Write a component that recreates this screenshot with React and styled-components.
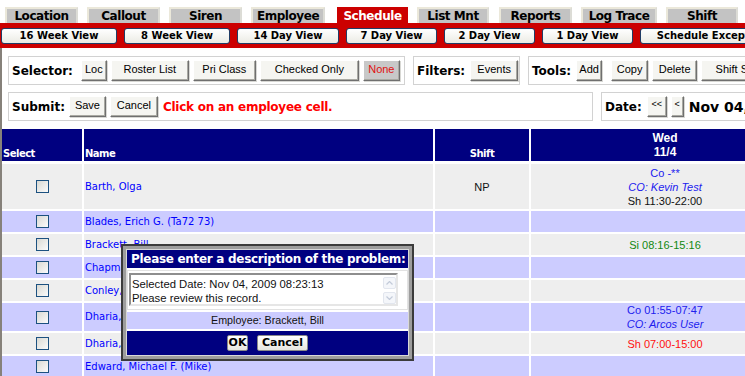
import React from "react";
import styled, { createGlobalStyle } from "styled-components";

const GlobalStyle = createGlobalStyle`
  html, body {
    margin: 0;
    padding: 0;
    background: #ffffff;
    overflow: hidden;
  }
  body {
    font-family: "Liberation Sans", Arial, sans-serif;
  }
`;

const tabs = [
  { label: "Location", w: 73, ml: 0 },
  { label: "Callout", w: 73, ml: 9 },
  { label: "Siren", w: 73, ml: 9 },
  { label: "Employee", w: 74, ml: 9 },
  { label: "Schedule", w: 71, ml: 12, active: true },
  { label: "List Mnt", w: 72, ml: 9 },
  { label: "Reports", w: 73, ml: 10 },
  { label: "Log Trace", w: 76, ml: 9 },
  { label: "Shift", w: 72, ml: 9 },
];

const views = [
  { label: "16 Week View", w: 116 },
  { label: "8 Week View", w: 106 },
  { label: "14 Day View", w: 102 },
  { label: "7 Day View", w: 91 },
  { label: "2 Day View", w: 91 },
  { label: "1 Day View", w: 91 },
  { label: "Schedule Exceptions", w: 150 },
];

const rows = [
  {
    name: "Barth, Olga",
    shift: "NP",
    h: 45,
    lines: [
      { t: "Co -**", c: "#2020ee" },
      { t: "CO: Kevin Test", c: "#2020ee", i: true },
      { t: "Sh 11:30-22:00", c: "#111111" },
    ],
  },
  { name: "Blades, Erich G. (Ta72 73)", h: 21, alt: true, lines: [] },
  { name: "Brackett, Bill", h: 21, lines: [{ t: "Si 08:16-15:16", c: "#118811" }] },
  { name: "Chapman, Tom", h: 21, alt: true, lines: [] },
  { name: "Conley, Mike", h: 21, lines: [] },
  {
    name: "Dharia, Raj",
    h: 28,
    alt: true,
    lines: [
      { t: "Co 01:55-07:47", c: "#2020ee" },
      { t: "CO: Arcos User", c: "#2020ee", i: true },
    ],
  },
  { name: "Dharia, Sam", h: 21, lines: [{ t: "Sh 07:00-15:00", c: "#ff1010" }] },
  { name: "Edward, Michael F. (Mike)", h: 21, alt: true, lines: [] },
];

export default function App() {
  return (
    <Page>
      <GlobalStyle />
      <TabStrip>
        {tabs.map((t) => (
          <Tab key={t.label} $w={t.w} $ml={t.ml} $active={t.active}>
            {t.label}
          </Tab>
        ))}
      </TabStrip>
      <ViewBar>
        {views.map((v) => (
          <ViewButton key={v.label} $w={v.w}>
            {v.label}
          </ViewButton>
        ))}
      </ViewBar>

      <Main>
        <Toolbars>
          <ToolRow>
            <GroupBox $w={397}>
              <Label $gap={8}>Selector:</Label>
              <Btn $w={26}>Loc</Btn>
              <Btn $w={78}>Roster List</Btn>
              <Btn $w={63}>Pri Class</Btn>
              <Btn $w={99}>Checked Only</Btn>
              <Btn $w={37} $pressed>None</Btn>
            </GroupBox>
            <GroupBox $w={107}>
              <Label $gap={5}>Filters:</Label>
              <Btn $w={48}>Events</Btn>
            </GroupBox>
            <GroupBox $w={260}>
              <Label $gap={5}>Tools:</Label>
              <Btn $w={26}>Add</Btn>
              <Btn $w={37} $ml={5}>Copy</Btn>
              <Btn $w={45}>Delete</Btn>
              <Btn $w={95}>Shift Shortcut</Btn>
            </GroupBox>
          </ToolRow>
          <ToolRow>
            <GroupBox $w={585}>
              <Label $gap={4}>Submit:</Label>
              <Btn $w={37}>Save</Btn>
              <Btn $w={48}>Cancel</Btn>
              <Notice>Click on an employee cell.</Notice>
            </GroupBox>
            <GroupBox $w={200}>
              <Label $gap={5}>Date:</Label>
              <Btn $w={20} $small>&lt;&lt;</Btn>
              <Btn $w={13} $small>&lt;</Btn>
              <DateText>Nov 04, 2009</DateText>
            </GroupBox>
          </ToolRow>
        </Toolbars>

        <Table>
          <HeadCell>Select</HeadCell>
          <HeadCell>Name</HeadCell>
          <HeadCell $center>Shift</HeadCell>
          <DayHead>
            <span>Wed</span>
            <span>11/4</span>
          </DayHead>
          {rows.map((r) => (
            <React.Fragment key={r.name}>
              <Cell $h={r.h} $alt={r.alt} $align="center">
                <Check />
              </Cell>
              <Cell $h={r.h} $alt={r.alt}>
                <NameLink>{r.name}</NameLink>
              </Cell>
              <Cell $h={r.h} $alt={r.alt} $align="center">
                <ShiftText>{r.shift}</ShiftText>
              </Cell>
              <Cell $h={r.h} $alt={r.alt} $align="center" $column>
                {r.lines.map((l) => (
                  <Entry key={l.t} $c={l.c} $i={l.i}>
                    {l.t}
                  </Entry>
                ))}
              </Cell>
            </React.Fragment>
          ))}
        </Table>
      </Main>

      <Dialog>
        <DialogInner>
          <DialogTitle>Please enter a description of the problem:</DialogTitle>
          <DialogBody>
            <TextBox>
              <TextLines>
                <div>Selected Date: Nov 04, 2009 08:23:13</div>
                <div>Please review this record.</div>
              </TextLines>
              <ScrollTrack>
                <ScrollArrow>
                  <svg width="7" height="4" viewBox="0 0 7 4">
                    <path d="M0.5 3.5 L3.5 0.5 L6.5 3.5" fill="none" stroke="#c3cbd9" strokeWidth="1.2" />
                  </svg>
                </ScrollArrow>
                <ScrollArrow>
                  <svg width="7" height="4" viewBox="0 0 7 4">
                    <path d="M0.5 0.5 L3.5 3.5 L6.5 0.5" fill="none" stroke="#c3cbd9" strokeWidth="1.2" />
                  </svg>
                </ScrollArrow>
              </ScrollTrack>
            </TextBox>
          </DialogBody>
          <EmployeeRow>Employee: Brackett, Bill</EmployeeRow>
          <DialogActions>
            <DialogButton $w={21}>OK</DialogButton>
            <DialogButton $w={51}>Cancel</DialogButton>
          </DialogActions>
        </DialogInner>
      </Dialog>
    </Page>
  );
}

const Page = styled.div`
  position: relative;
  width: 745px;
  height: 376px;
  overflow: hidden;
  background: #ffffff;
`;

const TabStrip = styled.div`
  display: flex;
  padding: 7px 0 0 5px;
  height: 16px;
`;

const Tab = styled.div`
  box-sizing: border-box;
  flex: none;
  width: ${(p) => p.$w}px;
  margin-left: ${(p) => p.$ml}px;
  height: 16px;
  background: ${(p) => (p.$active ? "#cc0000" : "#c3c3c3")};
  border-top: 2px solid ${(p) => (p.$active ? "#cc0000" : "#ebe8da")};
  border-left: 2px solid ${(p) => (p.$active ? "#cc0000" : "#ebe8da")};
  border-right: 2px solid ${(p) => (p.$active ? "#cc0000" : "#dcdcd6")};
  color: ${(p) => (p.$active ? "#ffffff" : "#000000")};
  font: bold 12px/14px "DejaVu Sans", Verdana, sans-serif;
  letter-spacing: -0.45px;
  text-align: center;
  white-space: nowrap;
`;

const ViewBar = styled.div`
  display: flex;
  gap: 7px;
  height: 25px;
  box-sizing: border-box;
  padding: 5px 0 0 1px;
  background: #cc0000;
`;

const ViewButton = styled.div`
  box-sizing: border-box;
  flex: none;
  width: ${(p) => p.$w}px;
  height: 16px;
  border: 1px solid #203d66;
  border-radius: 3px;
  background: linear-gradient(#ffffff, #ebebe4);
  color: #000000;
  font: bold 10px/14px "DejaVu Sans", Verdana, sans-serif;
  text-align: center;
  white-space: nowrap;
`;

const Main = styled.div`
  border-left: 2px solid #86817a;
  min-height: 330px;
`;

const Toolbars = styled.div`
  display: flex;
  flex-direction: column;
  gap: 7px;
  padding: 8px 0 0 6px;
`;

const ToolRow = styled.div`
  display: flex;
  gap: 8px;
`;

const GroupBox = styled.div`
  box-sizing: border-box;
  flex: none;
  display: flex;
  align-items: center;
  gap: 4px;
  width: ${(p) => p.$w}px;
  height: 29px;
  padding-left: 3px;
  border: 1px solid #d2d2d2;
  white-space: nowrap;
`;

const Label = styled.span`
  margin-right: ${(p) => p.$gap - 4}px;
  font: bold 12px/14px "DejaVu Sans", Verdana, sans-serif;
  color: #000000;
`;

const Btn = styled.div`
  box-sizing: border-box;
  flex: none;
  width: ${(p) => p.$w}px;
  height: 21px;
  margin-left: ${(p) => p.$ml || 0}px;
  border: 1px solid;
  border-color: #ffffff #6f6f6f #6f6f6f #ffffff;
  box-shadow: inset -1px -1px 0 #a9a9a2, 1px 1px 0 #d8d8d4;
  background: ${(p) => (p.$pressed ? "#c8c8c8" : "#f5f5f1")};
  color: ${(p) => (p.$pressed ? "#e01010" : "#000000")};
  font: ${(p) => (p.$small ? "9px/15px" : "11px/17px")} "Liberation Sans", Arial, sans-serif;
  text-align: center;
  overflow: hidden;
  white-space: nowrap;
`;

const Notice = styled.span`
  margin-left: 1px;
  font: bold 12px/14px "DejaVu Sans", Verdana, sans-serif;
  letter-spacing: -0.25px;
  color: #ff0000;
`;

const DateText = styled.span`
  margin-left: 1px;
  font: bold 14px/16px "DejaVu Sans", Verdana, sans-serif;
  color: #000000;
`;

const Table = styled.div`
  display: grid;
  grid-template-columns: 80px 349px 94px 268px;
  column-gap: 2px;
  row-gap: 2px;
  margin-top: 8px;
  background: #ffffff;
`;

const HeadCell = styled.div`
  display: flex;
  align-items: flex-end;
  justify-content: ${(p) => (p.$center ? "center" : "flex-start")};
  height: 32px;
  margin-bottom: 1px;
  padding: 0 1px 1px;
  box-sizing: border-box;
  background: #000080;
  color: #ffffff;
  font: bold 10px/12px "DejaVu Sans", Verdana, sans-serif;
  letter-spacing: -0.5px;
`;

const DayHead = styled.div`
  display: flex;
  flex-direction: column;
  align-items: center;
  justify-content: flex-end;
  height: 32px;
  margin-bottom: 1px;
  padding-bottom: 2px;
  box-sizing: border-box;
  background: #000080;
  color: #ffffff;
  font: bold 12px/14px "Liberation Sans", Arial, sans-serif;
`;

const Cell = styled.div`
  display: flex;
  flex-direction: ${(p) => (p.$column ? "column" : "row")};
  align-items: center;
  justify-content: ${(p) => (p.$column ? "center" : p.$align === "center" ? "center" : "flex-start")};
  height: ${(p) => p.$h}px;
  background: ${(p) => (p.$alt ? "#ccccff" : "#eeeeee")};
`;

const Check = styled.span`
  display: block;
  box-sizing: border-box;
  width: 13px;
  height: 13px;
  border: 1px solid #1c5180;
  background: linear-gradient(135deg, #d9d9d3, #fbfbfb);
`;

const NameLink = styled.span`
  padding-left: 1px;
  color: #0000ff;
  font: 10px/12px "DejaVu Sans", Verdana, sans-serif;
  white-space: nowrap;
`;

const ShiftText = styled.span`
  color: #111111;
  font: 11px/14px "Liberation Sans", Arial, sans-serif;
`;

const Entry = styled.span`
  color: ${(p) => p.$c};
  font-style: ${(p) => (p.$i ? "italic" : "normal")};
  font-size: 11px;
  line-height: 14px;
  font-family: "Liberation Sans", Arial, sans-serif;
  white-space: nowrap;
`;

const Dialog = styled.div`
  position: absolute;
  left: 121px;
  top: 244px;
  width: 293px;
  height: 117px;
  box-sizing: border-box;
  border: 2px solid #3b3b3b;
  padding: 3px;
  background: #9d9d9d;
`;

const DialogInner = styled.div`
  display: flex;
  flex-direction: column;
  gap: 2px;
  height: 100%;
  box-sizing: border-box;
  border: 1px solid #d8d8d8;
  background: #ffffff;
`;

const DialogTitle = styled.div`
  height: 18px;
  padding-left: 4px;
  background: #000080;
  color: #ffffff;
  font: bold 12px/18px "DejaVu Sans", Verdana, sans-serif;
  letter-spacing: -0.3px;
  white-space: nowrap;
  overflow: hidden;
`;

const DialogBody = styled.div`
  height: 40px;
  box-sizing: border-box;
  padding: 2px 0 0 1px;
  border: 1px solid #e2e2e2;
`;

const TextBox = styled.div`
  display: flex;
  box-sizing: border-box;
  width: 269px;
  height: 33px;
  border: 2px solid;
  border-color: #8e8e8e #e6e6e6 #e6e6e6 #8e8e8e;
  background: #ffffff;
`;

const TextLines = styled.div`
  flex: 1;
  padding: 2px 0 0 1px;
  color: #111111;
  font: 11.3px/14px "Liberation Sans", Arial, sans-serif;
  white-space: nowrap;
`;

const ScrollTrack = styled.div`
  display: flex;
  flex-direction: column;
  justify-content: space-between;
  width: 13px;
  padding: 2px 0 0;
`;

const ScrollArrow = styled.div`
  display: flex;
  align-items: center;
  justify-content: center;
  width: 13px;
  height: 12px;
  box-sizing: border-box;
  border: 1px solid #e2e6ee;
  border-radius: 2px;
  background: #f4f6fa;
`;

const EmployeeRow = styled.div`
  height: 17px;
  background: #ccccff;
  color: #111111;
  font: 10.7px/17px "Liberation Sans", Arial, sans-serif;
  text-align: center;
`;

const DialogActions = styled.div`
  display: flex;
  align-items: center;
  justify-content: center;
  gap: 9px;
  height: 24px;
  background: #000080;
`;

const DialogButton = styled.div`
  box-sizing: border-box;
  width: ${(p) => p.$w}px;
  height: 16px;
  border: 1px solid #8a8a8a;
  border-radius: 2px;
  background: linear-gradient(#ffffff, #e6e6e0);
  color: #000000;
  font: bold 11px/14px "DejaVu Sans", Verdana, sans-serif;
  text-align: center;
`;
